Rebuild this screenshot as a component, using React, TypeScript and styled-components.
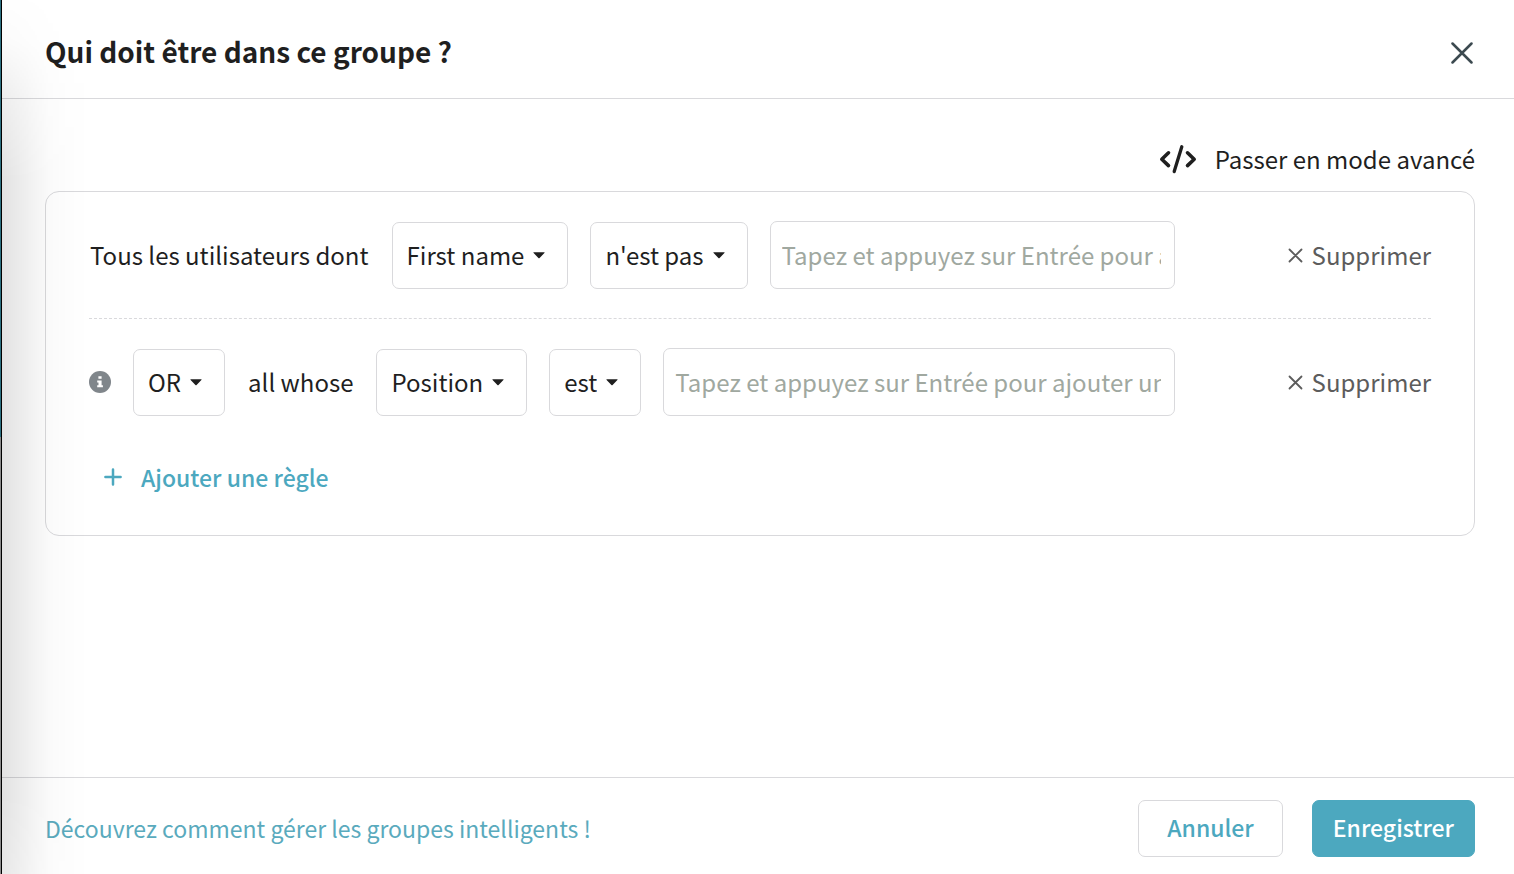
import React from 'react';
import styled, { createGlobalStyle } from 'styled-components';

const colors = {
  text: '#1f1f1f',
  muted: '#5c5c5c',
  placeholder: '#a0a8a0',
  line: '#d9d9dc',
  accent: '#4ca8bf',
  link: '#5aaabd',
};

const GlobalStyle = createGlobalStyle`
  *, *::before, *::after { box-sizing: border-box; }
  body {
    margin: 0;
    background: #fff;
    color: ${colors.text};
    font-family: "Noto Sans CJK SC", "Noto Sans", sans-serif;
    font-size: 24px;
    line-height: 36px;
  }
  button, input, select { font: inherit; color: inherit; margin: 0; }
`;

const Page = styled.div`
  display: flex;
  min-height: 100vh;
`;

const Backdrop = styled.div`
  flex: none;
  width: 2px;
  border-right: 1px solid #000;
  background: linear-gradient(#2b6f80 50%, #8a8a8a 50%);
`;

const Panel = styled.section`
  position: relative;
  flex: 1;
  min-width: 0;
  display: flex;
  flex-direction: column;

  &::before {
    content: '';
    position: absolute;
    inset: 0 auto 0 0;
    width: 88px;
    pointer-events: none;
    background: linear-gradient(
      to right,
      rgba(0, 0, 0, 0.115),
      rgba(0, 0, 0, 0.078) 20%,
      rgba(0, 0, 0, 0.046) 36%,
      rgba(0, 0, 0, 0.02) 54%,
      rgba(0, 0, 0, 0.007) 75%,
      transparent
    );
    mask-image: linear-gradient(
      rgba(0, 0, 0, 0.03),
      rgba(0, 0, 0, 0.15) 40px,
      rgba(0, 0, 0, 0.6) 95px,
      #000 180px,
      #000 calc(100% - 80px),
      rgba(0, 0, 0, 0.8)
    );
  }
`;

const Header = styled.header`
  display: flex;
  align-items: center;
  justify-content: space-between;
  padding: 31px 41px 23px 43px;
  border-bottom: 1px solid ${colors.line};
`;

const Title = styled.h1`
  margin: 0;
  padding-bottom: 4px;
  font-size: 28px;
  line-height: 40px;
  font-weight: 700;
`;

const PlainButton = styled.button`
  display: inline-flex;
  align-items: center;
  padding: 0;
  border: 0;
  background: none;
  cursor: pointer;
`;

const CloseButton = styled(PlainButton)`
  color: #3c4a50;
`;

const Body = styled.main`
  flex: 1;
  padding: 42px 39px 42px 43px;
`;

const ModeBar = styled.div`
  display: flex;
  justify-content: flex-end;
  padding-bottom: 14px;
`;

const ModeButton = styled(PlainButton)`
  gap: 18px;
`;

const Card = styled.div`
  padding: 0 43px 40px;
  border: 1px solid ${colors.line};
  border-radius: 14px;
`;

const Rule = styled.div`
  display: flex;
  align-items: center;
  gap: 22px;
  padding: 29px 0;

  & + & {
    border-top: 1px dashed ${colors.line};
  }
`;

const RuleText = styled.span`
  padding: 0 1px;
`;

const SelectBox = styled.span`
  position: relative;
  display: inline-flex;
  flex: none;
`;

const Select = styled.select`
  appearance: none;
  field-sizing: content;
  height: 67px;
  padding: 0 43px 0 14px;
  border: 1px solid ${colors.line};
  border-radius: 7px;
  background: transparent;
  cursor: pointer;
`;

const Caret = styled.svg`
  position: absolute;
  right: 23px;
  top: 30px;
  pointer-events: none;
`;

const ValueInput = styled.input`
  flex: 1;
  min-width: 0;
  height: 68px;
  padding: 0 13px 2px 11px;
  border: 1px solid ${colors.line};
  border-radius: 7px;
  background: transparent;

  &::placeholder {
    color: ${colors.placeholder};
    opacity: 1;
  }
`;

const RemoveButton = styled(PlainButton)`
  flex: none;
  gap: 9px;
  margin-left: 91px;
  color: ${colors.muted};
`;

const AddButton = styled(PlainButton)`
  gap: 19px;
  margin: 14px 0 0 15px;
  color: ${colors.accent};
  font-size: 23px;
  font-weight: 500;
`;

const Footer = styled.footer`
  display: flex;
  align-items: center;
  justify-content: space-between;
  padding: 22px 39px 17px 43px;
  border-top: 1px solid ${colors.line};
`;

const HelpLink = styled.a`
  padding-bottom: 2px;
  color: ${colors.link};
  font-size: 23px;
  text-decoration: none;
`;

const Actions = styled.div`
  display: flex;
  gap: 29px;
`;

const ActionButton = styled.button<{ $primary?: boolean }>`
  height: 57px;
  padding: 0 ${(p) => (p.$primary ? 20 : 28)}px 3px;
  border: 1px solid ${(p) => (p.$primary ? colors.accent : colors.line)};
  border-radius: 7px;
  background: ${(p) => (p.$primary ? colors.accent : 'transparent')};
  color: ${(p) => (p.$primary ? '#fff' : colors.accent)};
  font-size: 23px;
  font-weight: 500;
  cursor: pointer;
`;

const Cross = ({ size, stroke }: { size: number; stroke: number }) => (
  <svg width={size} height={size} viewBox={`0 0 ${size} ${size}`} aria-hidden="true">
    <path
      d={`M1.5 1.5L${size - 1.5} ${size - 1.5}M${size - 1.5} 1.5L1.5 ${size - 1.5}`}
      stroke="currentColor"
      strokeWidth={stroke}
      strokeLinecap="round"
      fill="none"
    />
  </svg>
);

const CodeIcon = () => (
  <svg width="38" height="30" viewBox="0 0 38 30" fill="none" stroke="currentColor" strokeLinecap="round" aria-hidden="true">
    <path d="M9.5 8.8L2.8 15.2L9.5 21.6M28.5 8.8L35.2 15.2L28.5 21.6" strokeWidth="3.6" strokeLinejoin="round" />
    <path d="M22.8 2.8L15.2 27.6" strokeWidth="3.3" />
  </svg>
);

const InfoIcon = () => (
  <svg width="22" height="22" viewBox="0 0 22 22" role="img" aria-label="Info">
    <circle cx="11" cy="11" r="11" fill="#80868b" />
    <path d="M9.4 5.2h3.2v2.6H9.4zM8.2 9.4h4.4v4.8h1.3v2H8.2v-2h1.3v-2.8H8.2z" fill="#fff" />
  </svg>
);

const PlusIcon = () => (
  <svg width="18" height="18" viewBox="0 0 18 18" aria-hidden="true">
    <path d="M9 1.4V16.6M1.4 9H16.6" stroke="currentColor" strokeWidth="2.5" strokeLinecap="round" />
  </svg>
);

const Dropdown = ({ label, options }: { label: string; options: string[] }) => (
  <SelectBox>
    <Select aria-label={label} defaultValue={options[0]}>
      {options.map((option) => (
        <option key={option}>{option}</option>
      ))}
    </Select>
    <Caret width="12" height="7" viewBox="0 0 12 7" aria-hidden="true">
      <path d="M0.8 0.3H11.2Q12 0.4 11.4 1L6.6 5.9Q6 6.5 5.4 5.9L0.6 1Q0 0.4 0.8 0.3Z" fill="currentColor" />
    </Caret>
  </SelectBox>
);

const RuleEnd = () => (
  <>
    <ValueInput type="text" aria-label="Valeur" placeholder="Tapez et appuyez sur Entrée pour ajouter une valeur" />
    <RemoveButton type="button">
      <Cross size={15} stroke={1.8} />
      Supprimer
    </RemoveButton>
  </>
);

export default function App() {
  return (
    <>
      <GlobalStyle />
      <Page>
        <Backdrop />
        <Panel>
          <Header>
            <Title>Qui doit être dans ce groupe ?</Title>
            <CloseButton type="button" aria-label="Fermer">
              <Cross size={22} stroke={2.5} />
            </CloseButton>
          </Header>
          <Body>
            <ModeBar>
              <ModeButton type="button">
                <CodeIcon />
                Passer en mode avancé
              </ModeButton>
            </ModeBar>
            <Card>
              <Rule>
                <RuleText>Tous les utilisateurs dont</RuleText>
                <Dropdown label="Champ" options={['First name', 'Position']} />
                <Dropdown label="Condition" options={["n'est pas", 'est']} />
                <RuleEnd />
              </Rule>
              <Rule>
                <InfoIcon />
                <Dropdown label="Opérateur" options={['OR', 'AND']} />
                <RuleText>all whose</RuleText>
                <Dropdown label="Champ" options={['Position', 'First name']} />
                <Dropdown label="Condition" options={['est', "n'est pas"]} />
                <RuleEnd />
              </Rule>
              <AddButton type="button">
                <PlusIcon />
                Ajouter une règle
              </AddButton>
            </Card>
          </Body>
          <Footer>
            <HelpLink href="#">Découvrez comment gérer les groupes intelligents !</HelpLink>
            <Actions>
              <ActionButton type="button">Annuler</ActionButton>
              <ActionButton type="button" $primary>
                Enregistrer
              </ActionButton>
            </Actions>
          </Footer>
        </Panel>
      </Page>
    </>
  );
}
